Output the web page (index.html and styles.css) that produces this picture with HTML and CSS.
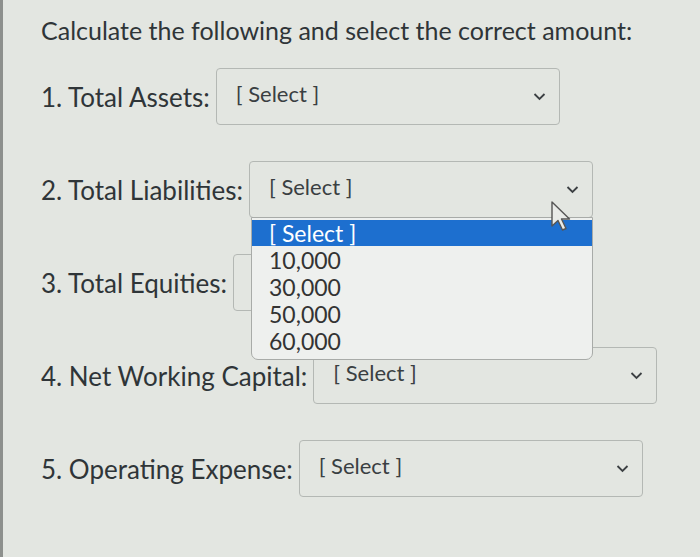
FILE: index.html
```html
<!DOCTYPE html>
<html lang="en">
<head>
  <meta charset="UTF-8">
  <title>Quiz question</title>
  <meta name="viewport" content="width=device-width, initial-scale=1.0">
  <link rel="stylesheet" href="styles.css">
</head>
<body>
  <div class="page">
    <p class="question">Calculate the following and select the correct amount:</p>

    <div class="row">
      <span class="label">1. Total Assets:</span>
      <div class="fake-select">
        <span class="value">[ Select ]</span>
        <svg class="chev" width="13" height="9" viewBox="0 0 13 9"><path d="M1.5 2 L6.5 7 L11.5 2" fill="none" stroke="#3c4043" stroke-width="1.8"/></svg>
      </div>
    </div>

    <div class="row">
      <span class="label">2. Total Liabilities:</span>
      <div class="fake-select open">
        <span class="value">[ Select ]</span>
        <svg class="chev" width="13" height="9" viewBox="0 0 13 9"><path d="M1.5 2 L6.5 7 L11.5 2" fill="none" stroke="#3c4043" stroke-width="1.8"/></svg>
        <!-- opened option list -->
        <ul class="options">
          <li class="active">[ Select ]</li>
          <li>10,000</li>
          <li>30,000</li>
          <li>50,000</li>
          <li>60,000</li>
        </ul>
        <svg class="cursor" width="22" height="32" viewBox="0 0 22 32"><path d="M2 2 L2 26 L8 20.5 L12.5 30 L16 28.5 L11.5 19 L19.5 19 Z" fill="#e9ebe8" stroke="#555" stroke-width="1.4" stroke-linejoin="round"/></svg>
      </div>
    </div>

    <div class="row">
      <span class="label">3. Total Equities:</span>
      <div class="fake-select">
        <span class="value">[ Select ]</span>
        <svg class="chev" width="13" height="9" viewBox="0 0 13 9"><path d="M1.5 2 L6.5 7 L11.5 2" fill="none" stroke="#3c4043" stroke-width="1.8"/></svg>
      </div>
    </div>

    <div class="row">
      <span class="label">4. Net Working Capital:</span>
      <div class="fake-select">
        <span class="value">[ Select ]</span>
        <svg class="chev" width="13" height="9" viewBox="0 0 13 9"><path d="M1.5 2 L6.5 7 L11.5 2" fill="none" stroke="#3c4043" stroke-width="1.8"/></svg>
      </div>
    </div>

    <div class="row">
      <span class="label">5. Operating Expense:</span>
      <div class="fake-select">
        <span class="value">[ Select ]</span>
        <svg class="chev" width="13" height="9" viewBox="0 0 13 9"><path d="M1.5 2 L6.5 7 L11.5 2" fill="none" stroke="#3c4043" stroke-width="1.8"/></svg>
      </div>
    </div>
  </div>
</body>
</html>
```

FILE: styles.css
```css
html, body {
  margin: 0; padding: 0;
  width: 700px; height: 557px;
  background: #e3e6e1;
  font-family: 'Lato', 'Open Sans', sans-serif;
  color: #2f3538;
  overflow: hidden;
}
.page {
  height: 557px;
  box-sizing: border-box;
  border-left: 3px solid #8d908d;
  padding: 0 0 0 38px;
}
.question {
  margin: 0;
  padding-top: 15px;
  font-size: 25px;
  line-height: 30px;
}
.row {
  display: flex;
  align-items: center;
  gap: 6px;
  height: 57px;
}
.question + .row { margin-top: 23px; }
.row + .row { margin-top: 36px; }
.label {
  font-size: 26px;
  white-space: nowrap;
}
.fake-select {
  position: relative;
  width: 344px;
  height: 57px;
  box-sizing: border-box;
  border: 1.5px solid #b4b8b4;
  border-radius: 4px;
  display: flex;
  align-items: center;
  padding: 0 13px 6px 19px;
}
.fake-select .value {
  flex: 1;
  font-size: 22px;
  color: #3a3f42;
}
.fake-select .chev { margin-top: 6px; }
.options {
  list-style: none;
  margin: 0;
  padding: 2px 0 4px;
  position: absolute;
  left: 1px;
  right: -1px;
  top: 100%;
  background: #eef0ee;
  border: 1.5px solid #a8aba8;
  border-radius: 0 0 7px 7px;
  z-index: 5;
}
.options li {
  font-size: 23px;
  line-height: 27px;
  padding-left: 17px;
  color: #333;
}
.options li.active {
  background: #1d6fcf;
  color: #fff;
  line-height: 26px;
  margin-bottom: 1px;
}
.cursor {
  position: absolute;
  left: 300px;
  top: 38px;
  z-index: 6;
}
```
